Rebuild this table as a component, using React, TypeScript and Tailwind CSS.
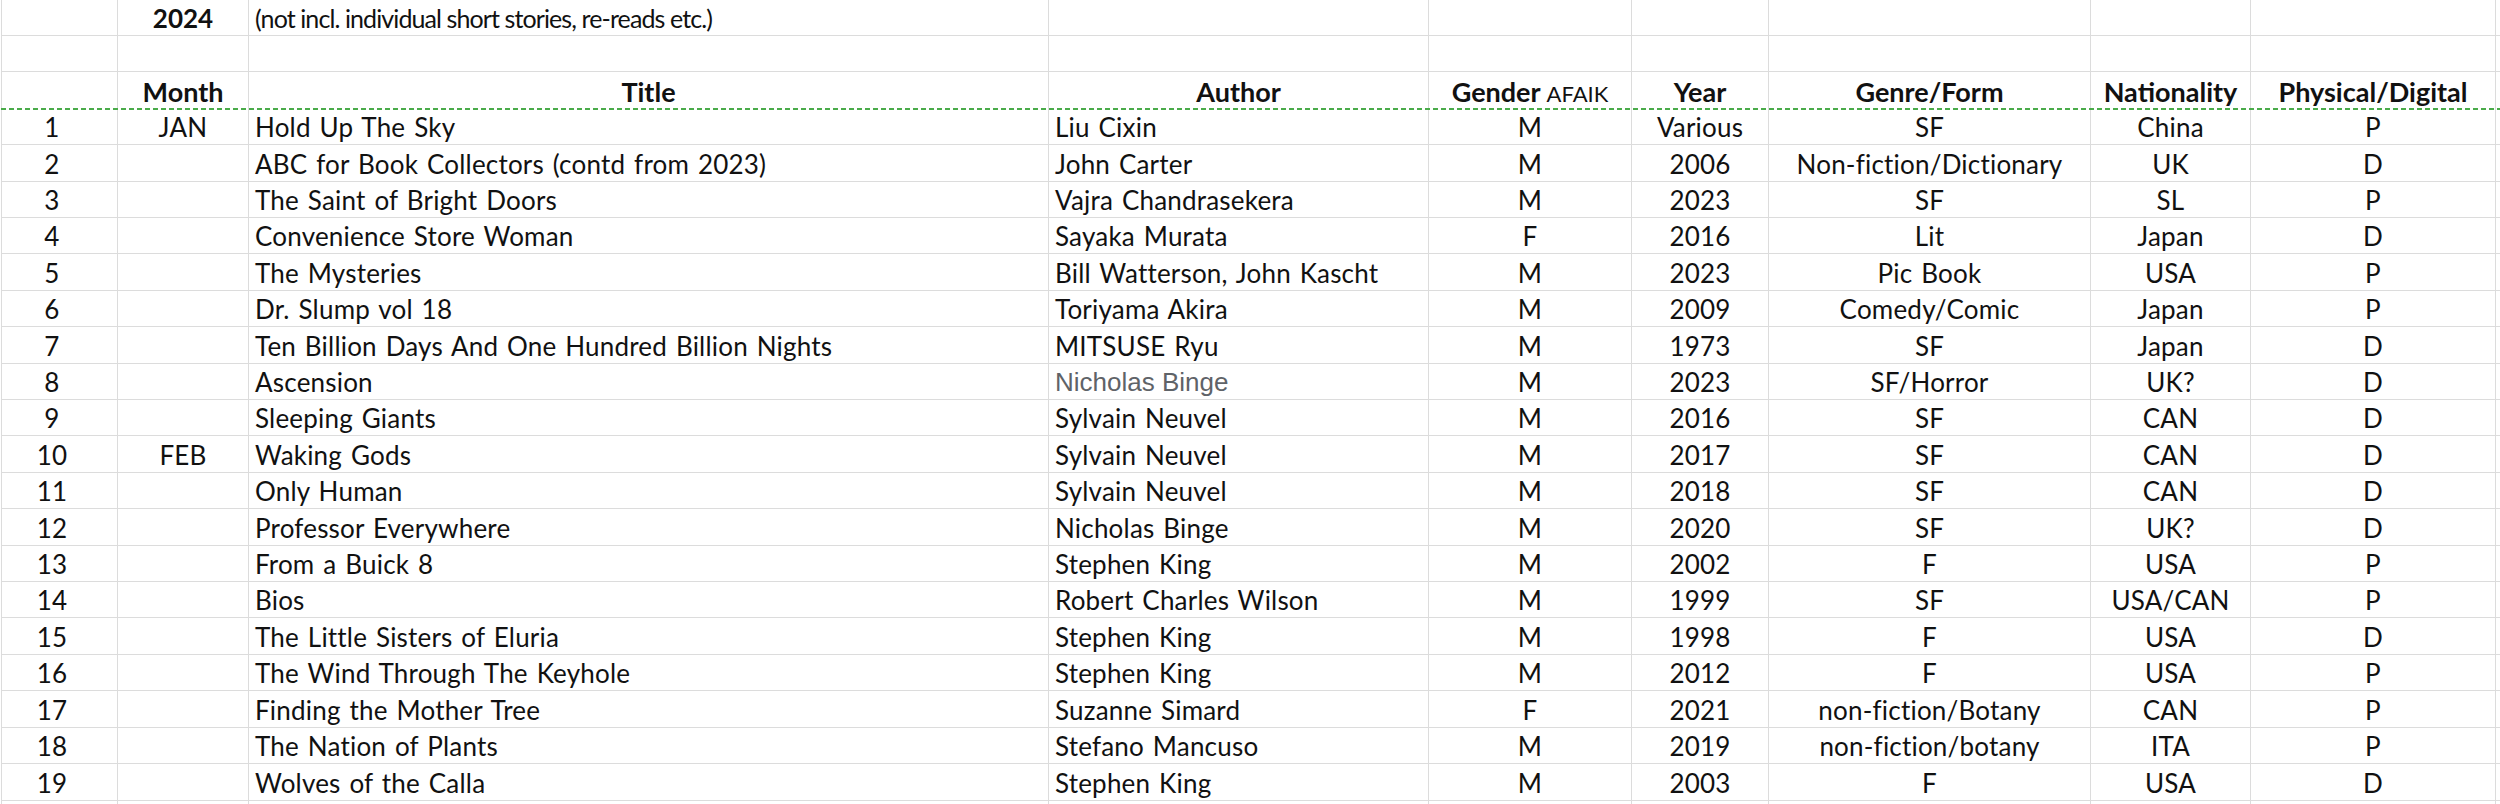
import React from 'react';

type Row = {
  n: number;
  month?: string;
  title: string;
  author: string;
  gender: string;
  year: string;
  genre: string;
  nat: string;
  pd: string;
  grayAuthor?: boolean;
};

const rows: Row[] = [
  { n: 1, month: 'JAN', title: 'Hold Up The Sky', author: 'Liu Cixin', gender: 'M', year: 'Various', genre: 'SF', nat: 'China', pd: 'P' },
  { n: 2, title: 'ABC for Book Collectors (contd from 2023)', author: 'John Carter', gender: 'M', year: '2006', genre: 'Non-fiction/Dictionary', nat: 'UK', pd: 'D' },
  { n: 3, title: 'The Saint of Bright Doors', author: 'Vajra Chandrasekera', gender: 'M', year: '2023', genre: 'SF', nat: 'SL', pd: 'P' },
  { n: 4, title: 'Convenience Store Woman', author: 'Sayaka Murata', gender: 'F', year: '2016', genre: 'Lit', nat: 'Japan', pd: 'D' },
  { n: 5, title: 'The Mysteries', author: 'Bill Watterson, John Kascht', gender: 'M', year: '2023', genre: 'Pic Book', nat: 'USA', pd: 'P' },
  { n: 6, title: 'Dr. Slump vol 18', author: 'Toriyama Akira', gender: 'M', year: '2009', genre: 'Comedy/Comic', nat: 'Japan', pd: 'P' },
  { n: 7, title: 'Ten Billion Days And One Hundred Billion Nights', author: 'MITSUSE Ryu', gender: 'M', year: '1973', genre: 'SF', nat: 'Japan', pd: 'D' },
  { n: 8, title: 'Ascension', author: 'Nicholas Binge', gender: 'M', year: '2023', genre: 'SF/Horror', nat: 'UK?', pd: 'D', grayAuthor: true },
  { n: 9, title: 'Sleeping Giants', author: 'Sylvain Neuvel', gender: 'M', year: '2016', genre: 'SF', nat: 'CAN', pd: 'D' },
  { n: 10, month: 'FEB', title: 'Waking Gods', author: 'Sylvain Neuvel', gender: 'M', year: '2017', genre: 'SF', nat: 'CAN', pd: 'D' },
  { n: 11, title: 'Only Human', author: 'Sylvain Neuvel', gender: 'M', year: '2018', genre: 'SF', nat: 'CAN', pd: 'D' },
  { n: 12, title: 'Professor Everywhere', author: 'Nicholas Binge', gender: 'M', year: '2020', genre: 'SF', nat: 'UK?', pd: 'D' },
  { n: 13, title: 'From a Buick 8', author: 'Stephen King', gender: 'M', year: '2002', genre: 'F', nat: 'USA', pd: 'P' },
  { n: 14, title: 'Bios', author: 'Robert Charles Wilson', gender: 'M', year: '1999', genre: 'SF', nat: 'USA/CAN', pd: 'P' },
  { n: 15, title: 'The Little Sisters of Eluria', author: 'Stephen King', gender: 'M', year: '1998', genre: 'F', nat: 'USA', pd: 'D' },
  { n: 16, title: 'The Wind Through The Keyhole', author: 'Stephen King', gender: 'M', year: '2012', genre: 'F', nat: 'USA', pd: 'P' },
  { n: 17, title: 'Finding the Mother Tree', author: 'Suzanne Simard', gender: 'F', year: '2021', genre: 'non-fiction/Botany', nat: 'CAN', pd: 'P' },
  { n: 18, title: 'The Nation of Plants', author: 'Stefano Mancuso', gender: 'M', year: '2019', genre: 'non-fiction/botany', nat: 'ITA', pd: 'P' },
  { n: 19, title: 'Wolves of the Calla', author: 'Stephen King', gender: 'M', year: '2003', genre: 'F', nat: 'USA', pd: 'D' },
];

const cols = 'grid grid-cols-[116px_131px_800px_380px_203px_137px_322px_160px_245px_1fr]';
const cell = 'flex items-end pb-[4px] px-[6px] border-r border-[#dcdcdc] whitespace-nowrap overflow-hidden';
const center = `${cell} justify-center`;
const numCell = `${cell} justify-center pr-[21px]`;

function Blank({ n = 10 }: { n?: number }) {
  return (
    <>
      {Array.from({ length: n }).map((_, i) => (
        <div key={i} className={cell} />
      ))}
    </>
  );
}

export default function App() {
  return (
    <div className="w-[2500px] h-[804px] overflow-hidden bg-white text-[#111] text-[26px] leading-none font-[family-name:Lato,sans-serif]">
      <div className="ml-[1px] border-l border-[#dcdcdc]">
        {/* sheet title row */}
        <div className={`${cols} h-[36px] border-b border-[#dcdcdc]`}>
          <div className={cell} />
          <div className={`${center} font-bold`}>2024</div>
          <div className={`${cell} text-[25px] tracking-[-0.9px]`}>(not incl. individual short stories, re-reads etc.)</div>
          <Blank n={7} />
        </div>

        <div className={`${cols} h-[36.4px] border-b border-[#dcdcdc]`}>
          <Blank />
        </div>

        {/* header */}
        <div className="relative">
          <div className={`${cols} h-[36.4px] font-bold text-[27px]`}>
            <div className={cell} />
            <div className={center}>Month</div>
            <div className={center}>Title</div>
            <div className={center}>Author</div>
            <div className={center}>
              Gender<span className="ml-[6px] font-normal text-[22px]">AFAIK</span>
            </div>
            <div className={center}>Year</div>
            <div className={center}>Genre/Form</div>
            <div className={center}>Nationality</div>
            <div className={center}>Physical/Digital</div>
            <div className={cell} />
          </div>
          <div className="absolute left-[-1px] right-0 bottom-[-1px] h-[2px] bg-[repeating-linear-gradient(90deg,#4aab4a_0_5px,transparent_5px_8px)]" />
        </div>

        <div className="tracking-[0.2px] [word-spacing:2px]">
          {rows.map((r) => (
            <div key={r.n} className={`${cols} h-[36.42px] border-b border-[#dcdcdc]`}>
              <div className={numCell}>{r.n}</div>
              <div className={center}>{r.month ?? ''}</div>
              <div className={cell}>{r.title}</div>
              {r.grayAuthor ? (
                <div className={`${cell} text-[#5f6368] text-[26px] tracking-normal [word-spacing:normal] font-[family-name:'Liberation_Sans',Arial,sans-serif]`}>
                  {r.author}
                </div>
              ) : (
                <div className={cell}>{r.author}</div>
              )}
              <div className={center}>{r.gender}</div>
              <div className={center}>{r.year}</div>
              <div className={center}>{r.genre}</div>
              <div className={center}>{r.nat}</div>
              <div className={center}>{r.pd}</div>
              <div className={cell} />
            </div>
          ))}

          <div className={`${cols} h-[36.42px]`}>
            <Blank />
          </div>
        </div>
      </div>
    </div>
  );
}
